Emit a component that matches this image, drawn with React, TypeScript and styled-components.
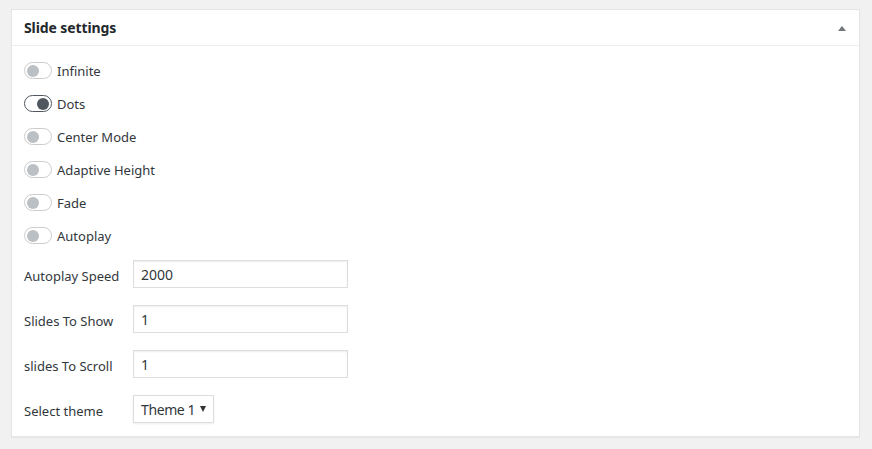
import React from "react";
import styled, { createGlobalStyle } from "styled-components";

const Global = createGlobalStyle`
  html, body { margin: 0; padding: 0; background: #f1f1f1; }
  body { font-family: "Noto Sans", "Open Sans", sans-serif; color: #444; }
  * { box-sizing: border-box; }
`;

const Page = styled.div`
  padding: 9px 12px 12px 11px;
  width: 872px;
  height: 449px;
`;

const Panel = styled.div`
  background: #fff;
  border: 1px solid #e5e5e5;
  box-shadow: 0 1px 1px rgba(0, 0, 0, 0.04);
  width: 849px;
`;

const Header = styled.div`
  height: 36px;
  border-bottom: 1px solid #eee;
  display: flex;
  align-items: center;
  justify-content: space-between;
  padding: 0 12px 0 12px;
`;

const Title = styled.h2`
  margin: 0;
  font-size: 14px;
  font-weight: 700;
  color: #23282d;
  letter-spacing: -0.1px;
`;

const Arrow = styled.span`
  width: 0;
  height: 0;
  border-left: 4px solid transparent;
  border-right: 4px solid transparent;
  border-bottom: 5px solid #72777c;
  margin-right: 1px;
  margin-top: 1px;
`;

const Body = styled.div`
  padding: 16px 12px 13px 12px;
  display: flex;
  flex-direction: column;
`;

const ToggleRow = styled.label`
  display: flex;
  align-items: center;
  gap: 5px;
  height: 17px;
  margin-bottom: 16px;
  font-size: 13px;
  color: #32373c;
`;

const Track = styled.span<{ $on: boolean }>`
  width: 28px;
  height: 17px;
  border-radius: 9px;
  border: 1px solid ${(p) => (p.$on ? "#50575e" : "#ccc")};
  display: flex;
  align-items: center;
  justify-content: ${(p) => (p.$on ? "flex-end" : "flex-start")};
  padding: 0 2px;
  background: #fff;
`;

const Knob = styled.span<{ $on: boolean }>`
  width: 12px;
  height: 12px;
  border-radius: 50%;
  background: ${(p) => (p.$on ? "#50575e" : "#bbc0c4")};
`;

const FieldRow = styled.div`
  display: flex;
  align-items: center;
  height: 28px;
  margin-bottom: 17px;
  &:last-child { margin-bottom: 0; }
`;

const FieldLabel = styled.span`
  width: 109px;
  font-size: 13px;
  color: #32373c;
  padding-top: 4px;
`;

const Input = styled.input`
  width: 215px;
  height: 28px;
  border: 1px solid #ddd;
  box-shadow: inset 0 1px 2px rgba(0, 0, 0, 0.07);
  font-family: "Noto Sans", "Open Sans", sans-serif;
  font-size: 14px;
  color: #32373c;
  padding: 0 7px;
  outline: none;
`;

const SelectBox = styled.div`
  width: 81px;
  height: 28px;
  border: 1px solid #ddd;
  box-shadow: 0 1px 2px rgba(0, 0, 0, 0.07);
  display: flex;
  align-items: center;
  justify-content: space-between;
  padding: 0 7px 0 7px;
  font-size: 14px;
  letter-spacing: -0.4px;
  color: #32373c;
`;

const Caret = styled.span`
  width: 0;
  height: 0;
  border-left: 3px solid transparent;
  border-right: 3px solid transparent;
  border-top: 6px solid #333;
`;

const toggles: [string, boolean][] = [
  ["Infinite", false],
  ["Dots", true],
  ["Center Mode", false],
  ["Adaptive Height", false],
  ["Fade", false],
  ["Autoplay", false],
];

const fields: [string, string][] = [
  ["Autoplay Speed", "2000"],
  ["Slides To Show", "1"],
  ["slides To Scroll", "1"],
];

export default function App() {
  return (
    <>
      <Global />
      <Page>
        <Panel>
          <Header>
            <Title>Slide settings</Title>
            <Arrow />
          </Header>
          <Body>
            {toggles.map(([name, on]) => (
              <ToggleRow key={name}>
                <Track $on={on}>
                  <Knob $on={on} />
                </Track>
                {name}
              </ToggleRow>
            ))}
            {fields.map(([name, val]) => (
              <FieldRow key={name}>
                <FieldLabel>{name}</FieldLabel>
                <Input defaultValue={val} />
              </FieldRow>
            ))}
            <FieldRow>
              <FieldLabel>Select theme</FieldLabel>
              <SelectBox>
                Theme 1
                <Caret />
              </SelectBox>
            </FieldRow>
          </Body>
        </Panel>
      </Page>
    </>
  );
}
